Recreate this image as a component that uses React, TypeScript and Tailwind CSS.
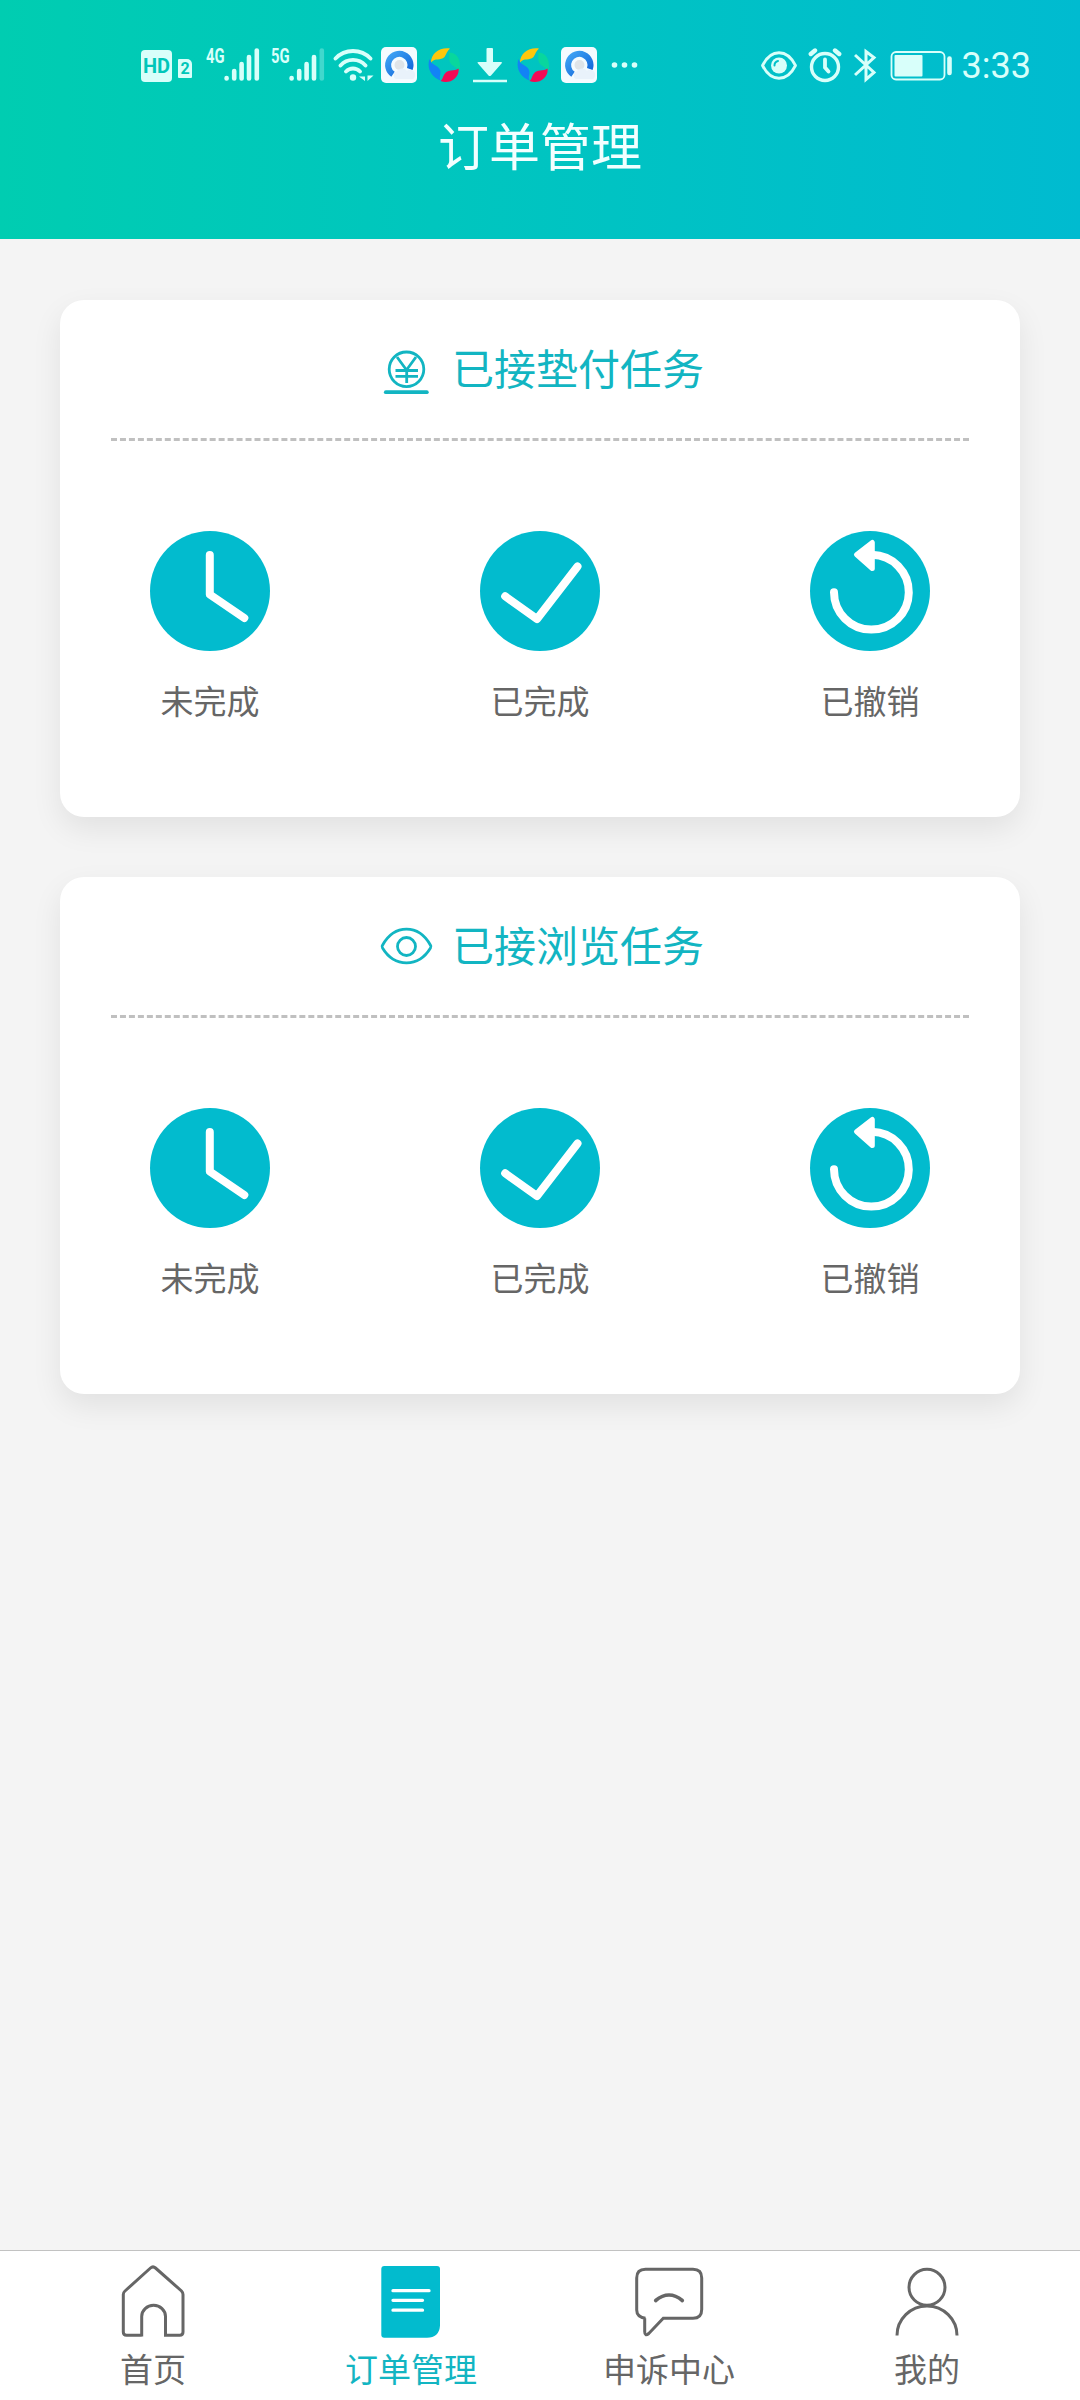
import type { ReactNode } from "react";

const CLOCK = <path d="M59.8 24V63.5L94.3 87" />;
const CHECK = <path d="M25.2 65.3L57 88L97.5 35.5" />;
const UNDO = (
  <>
    <path d="M24 61.2A37.4 37.4 0 1 0 62 23.8" />
    <path
      d="M46.5 23.7L62.3 11.5V37.5Z"
      fill="white"
      strokeWidth="5"
    />
  </>
);

const ACTIONS = [
  { label: "未完成", icon: CLOCK },
  { label: "已完成", icon: CHECK },
  { label: "已撤销", icon: UNDO },
];

function Signal({ label, weak }: { label: string; weak?: boolean }) {
  return (
    <div className="flex h-9 w-[54px]">
      <span className="w-[18px] origin-left scale-x-[0.74] font-[Roboto] text-[20px] leading-[19px] font-bold">
        {label}
      </span>
      <svg width="36" height="36" viewBox="0 0 36 36" fill="none" stroke="currentColor" strokeWidth="4.6" strokeLinecap="round">
        <path d="M2.6 31V31.5M10.2 24V31.5M17.6 17V31.5M25 10V31.5" />
        <path d="M32.8 3.5V31.5" opacity={weak ? 0.3 : 1} />
      </svg>
    </div>
  );
}

function BrowserIcon() {
  return (
    <svg width="36" height="36" viewBox="0 0 36 36">
      <defs>
        <linearGradient id="ring" x1="0" y1="0" x2="1" y2="1">
          <stop offset="0" stopColor="#3fa4f5" />
          <stop offset="1" stopColor="#1264d8" />
        </linearGradient>
      </defs>
      <rect width="36" height="36" rx="5" fill="#f4fbff" />
      <path d="M12 27.3A11.200 11.200 0 1 1 28.800 22" fill="none" stroke="url(#ring)" strokeWidth="6" />
      <circle cx="18.500" cy="18" r="5" fill="#dfe4e8" />
      <path d="M15 32a4 4 0 0 1 .5-7.500a6.500 6.500 0 0 1 10.500-.8a5 5 0 0 1 6 8.300z" fill="#e9f2fb" />
    </svg>
  );
}

function SwirlIcon() {
  return (
    <svg width="34" height="36" viewBox="0 0 34 36">
      <path d="M3 15.500C3 6 12 0 22 1.500C19 4 18.500 7 16.500 10C12.500 14 7 10.500 3 15.500Z" fill="#fdc70c" />
      <path d="M21 5.500C29 5 34 14 31.500 24C28 20 26 20 23 17C20 13 22 9 21 5.500Z" fill="#0bdc92" opacity="0.75" />
      <path d="M1.500 12C-1.500 21 3 30 12.500 33.500C10.500 30 13.500 27 12 23C10 17.500 3.500 19 1.500 12Z" fill="#1283f5" />
      <path d="M12.500 34C15 32.500 14.500 29.500 17 26.500C20.500 22 26 24.500 30.500 21.500C32 30 22 38 12.500 34Z" fill="#f30a55" />
    </svg>
  );
}

function StatusBar() {
  return (
    <div className="flex h-9 pr-[49px] pl-[141px] text-[#d8fffa]">
      <div className="mt-[3px] flex h-8 w-[31px] items-center justify-center rounded-[4px] bg-[#d8fffa] font-[Roboto] text-[20px] font-bold text-[#00c6b9]">
        HD
      </div>
      <div className="mt-[12px] ml-[6px] flex h-[19px] w-[14px] items-center justify-center rounded-[1px] rounded-tr-[5px] bg-[#d8fffa] font-[Roboto] text-[16px] font-bold text-[#00c6b9]">
        2
      </div>
      <div className="ml-[14px]">
        <Signal label="4G" />
      </div>
      <div className="ml-[11px]">
        <Signal label="5G" weak />
      </div>
      <svg className="ml-[8px]" width="41" height="36" viewBox="0 0 41 36" fill="none" stroke="currentColor" strokeWidth="3.800" strokeLinecap="round">
        <path d="M2.500 11.500C12 1.500 28 1.500 37.500 11.500M7.500 18.500C14 11 26 11 32.500 18.500M13 24.500C17 20.500 23 20.500 27 24.500" />
        <circle cx="20" cy="30.500" r="3.200" fill="currentColor" stroke="none" />
        <path d="M32 24.500V34L26 29.500H32M34.500 34V24.500V28.500H40.500L34.500 34Z" fill="currentColor" stroke="none" />
      </svg>
      <div className="ml-[7px]">
        <BrowserIcon />
      </div>
      <div className="ml-[11px]">
        <SwirlIcon />
      </div>
      <svg className="ml-[11px]" width="34" height="36" viewBox="0 0 34 36" fill="currentColor">
        <path d="M13.500 2Q13.500 1 14.500 1H19Q20 1 20 2V15H28Q30 15 28.500 16.500L18 28.500Q16.700 29.500 15.500 28.500L5 16.500Q3.500 15 5.500 15H13.500Z" />
        <path d="M0 32.800H34V35.200H0Z" />
      </svg>
      <div className="ml-[10px]">
        <SwirlIcon />
      </div>
      <div className="ml-[10px]">
        <BrowserIcon />
      </div>
      <svg className="ml-[14px]" width="28" height="36" viewBox="0 0 28 36" fill="currentColor">
        <circle cx="3.500" cy="18" r="2.800" />
        <circle cx="13.500" cy="18" r="2.800" />
        <circle cx="23.500" cy="18" r="2.800" />
      </svg>

      <div className="ml-auto flex">
        <svg width="36" height="36" viewBox="0 0 36 36" fill="none" stroke="currentColor" strokeWidth="2.800">
          <path d="M1.500 18.500C10 1.500 26 1.500 34.500 18.500C26 35.500 10 35.500 1.500 18.500Z" strokeLinejoin="round" />
          <circle cx="18" cy="18.500" r="8" fill="currentColor" stroke="none" />
          <path d="M13.500 18.500A4.500 4.500 0 0 1 17 14" stroke="#00c2c9" strokeWidth="2" strokeLinecap="round" />
        </svg>
        <svg className="ml-[11px]" width="34" height="36" viewBox="0 0 34 36" fill="none" stroke="currentColor" strokeWidth="3.400" strokeLinecap="round">
          <circle cx="17" cy="20" r="13.500" />
          <path d="M17 12.500V20.500L20.500 24.500" strokeWidth="3.800" />
          <path d="M2.800 7L7 3.500M31.200 7L27 3.500" strokeWidth="4.400" />
        </svg>
        <svg className="ml-[12px]" width="23" height="36" viewBox="0 0 23 36" fill="none" stroke="currentColor" strokeWidth="3">
          <path d="M1 8L20 25.500L12 32.500V4.500L20 10.500L1 28" />
        </svg>
        <svg className="ml-[13px]" width="63" height="36" viewBox="0 0 63 36" fill="none" stroke="currentColor">
          <rect x="1.500" y="5" width="53" height="27.500" rx="4.500" strokeWidth="1.800" />
          <rect x="4.500" y="8" width="28" height="21.500" rx="1" fill="currentColor" stroke="none" />
          <path d="M59.500 11.500V26" strokeWidth="4.600" strokeLinecap="round" />
        </svg>
        <span className="ml-[9px] font-[Roboto] text-[36px] leading-[38px]">3:33</span>
      </div>
    </div>
  );
}

function Card({ title, icon }: { title: string; icon: ReactNode }) {
  return (
    <section className="h-[517px] rounded-[24px] bg-white px-[50px] pt-10 shadow-[0_12px_30px_rgba(0,0,0,0.08)]">
      <div className="flex h-[60px] items-center justify-center gap-4 text-[42px] text-[#12b5c2]">
        <svg width="60" height="60" viewBox="0 0 60 60" fill="none" stroke="currentColor" strokeWidth="2.800">
          {icon}
        </svg>
        <h2 className="-mt-[7px]">{title}</h2>
      </div>
      <div className="mx-px mt-[38px] border-t-[3px] border-dashed border-[#c0c0c0]" />
      <div className="mt-[90px] flex justify-between px-10">
        {ACTIONS.map((action) => (
          <div key={action.label} className="flex w-[120px] flex-col items-center">
            <div className="size-[120px] rounded-full bg-[#02bbce]">
              <svg viewBox="0 0 120 120" fill="none" stroke="white" strokeWidth="8" strokeLinecap="round" strokeLinejoin="round">
                {action.icon}
              </svg>
            </div>
            <span className="mt-[29px] text-[33px] leading-10 text-[#666]">{action.label}</span>
          </div>
        ))}
      </div>
    </section>
  );
}

const TABS = [
  {
    label: "首页",
    icon: (
      <path d="M27.7 73.300H12.500Q9.300 73.300 9.300 70V32.500Q9.300 30.500 11 29L36.500 6Q39 3.800 41.500 6L67.500 29Q69 30.500 69 32.500V70Q69 73.300 65.800 73.300H51.500V54.500A11.900 11.200 0 0 0 27.700 54.500V74.500" />
    ),
  },
  {
    label: "订单管理",
    active: true,
    icon: (
      <>
        <path d="M12.300 4H65Q68 4 68 7V63.700Q67 75.700 55 75.700H12.300Q9.300 75.700 9.300 72.700V7Q9.300 4 12.300 4Z" fill="#02bbce" stroke="none" />
        <path d="M21 28.700H57M21 38.300H50.500M21 48.200H50.500" stroke="white" strokeWidth="3.300" strokeLinecap="round" />
      </>
    ),
  },
  {
    label: "申诉中心",
    icon: (
      <>
        <path d="M15.500 56.300Q6.700 55 6.700 48V16Q6.700 7.300 15.500 7.300H63Q71.700 7.300 71.700 16V47.500Q71.700 56.300 63 56.300H33.300L18.800 71.500Q14.700 75 14.700 69.500V56.300" />
        <path d="M25.700 38.500Q39 27.500 52.300 38.500" strokeWidth="3.600" strokeLinecap="round" />
      </>
    ),
  },
  {
    label: "我的",
    icon: (
      <>
        <circle cx="39" cy="25.300" r="18" />
        <path d="M9 73.500A30 29.500 0 0 1 69 73.500" />
      </>
    ),
  },
];

function App() {
  return (
    <div className="flex h-[2400px] w-[1080px] flex-col bg-[#f4f4f4] font-['Noto_Sans_CJK_SC',sans-serif]">
      <header className="h-[239px] bg-linear-to-r from-[#00cdb1] to-[#00bbd0] pt-[47px]">
        <StatusBar />
        <h1 className="mt-[29px] text-center text-[51px] leading-[64px] text-[#f2ffff]">订单管理</h1>
      </header>

      <main className="flex flex-1 flex-col gap-[60px] px-[60px] pt-[61px]">
        <Card
          title="已接垫付任务"
          icon={
            <>
              <circle cx="30.500" cy="29.300" r="17.300" />
              <path d="M21 17L30.500 30L40 17M19.500 30.500H42M19.500 36.300H42M30.700 30V43" />
              <path d="M9.800 52.200H50.800" strokeWidth="3.800" strokeLinecap="round" />
            </>
          }
        />
        <Card
          title="已接浏览任务"
          icon={
            <>
              <path d="M6.500 28.200C18.500 6.800 42.500 6.800 54.500 28.200Q55.500 29.500 54.500 31C42.500 50.800 18.500 50.800 6.500 31Q5.500 29.500 6.500 28.200Z" />
              <circle cx="30.500" cy="29.500" r="9" />
            </>
          }
        />
      </main>

      <nav className="flex h-[150px] border-t border-[#c2c2c2] bg-white px-6 pt-[11px]">
        {TABS.map((tab) => (
          <div
            key={tab.label}
            className={`flex flex-1 flex-col items-center ${tab.active ? "text-[#12b5c2]" : "text-[#666]"}`}
          >
            <svg width="78" height="78" viewBox="0 0 78 78" fill="none" stroke="currentColor" strokeWidth="3">
              {tab.icon}
            </svg>
            <span className="mt-[8px] text-[33px] leading-10">{tab.label}</span>
          </div>
        ))}
      </nav>
    </div>
  );
}

export default App;
